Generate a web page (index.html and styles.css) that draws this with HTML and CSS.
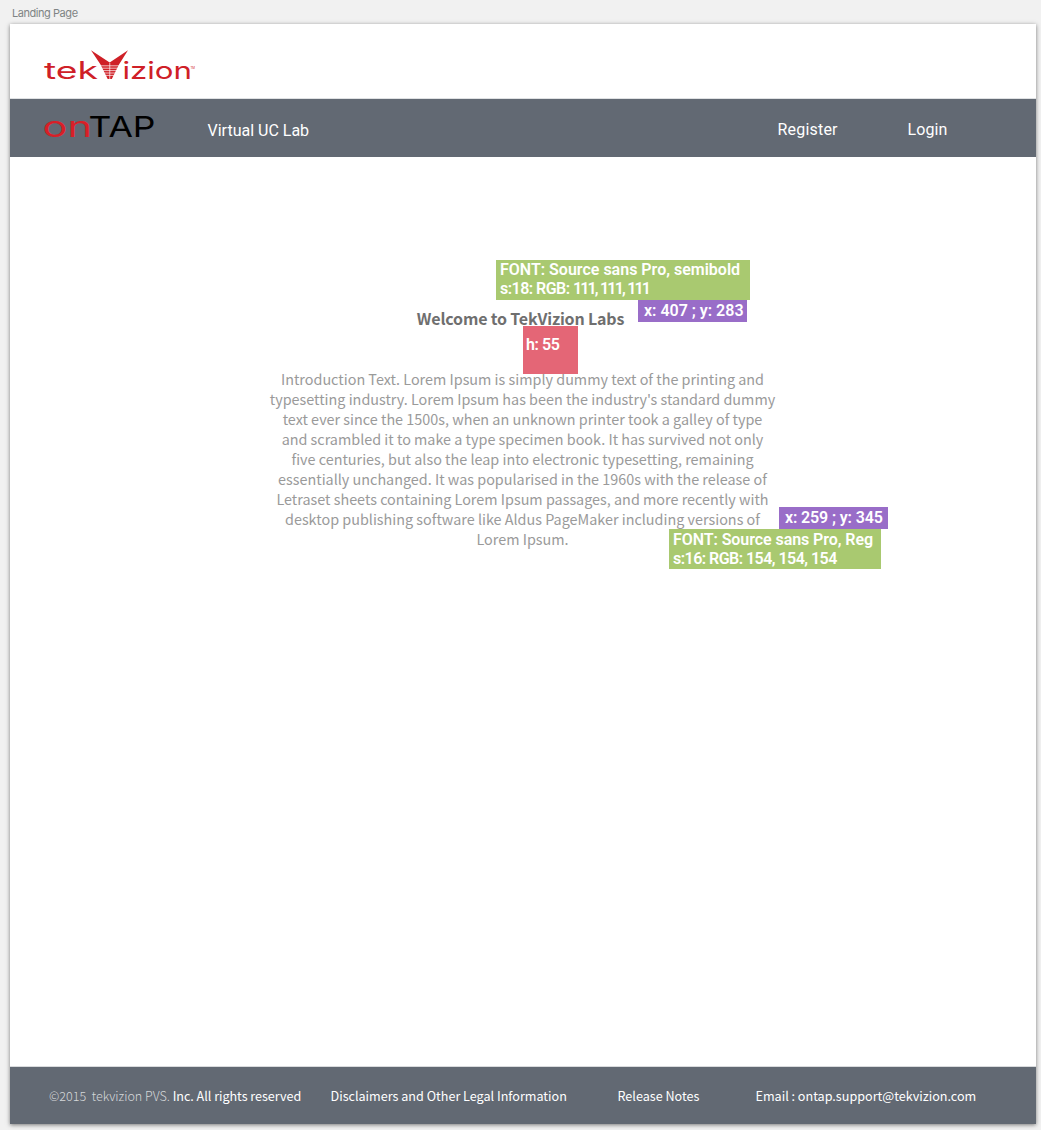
FILE: index.html
```html
<!DOCTYPE html>
<html lang="en">
<head>
<meta charset="utf-8">
<title>Landing Page</title>
<link rel="stylesheet" href="styles.css">
</head>
<body>
<div class="board-name">Landing Page</div>
<div class="board">
  <header class="brand">
    <svg class="logo" width="160" height="50" viewBox="40 42 160 50" role="img" aria-label="tekVizion">
      <g class="logo-text">
        <text x="44" y="79" textLength="54" lengthAdjust="spacingAndGlyphs">tek</text>
        <text x="122.500" y="79" textLength="69.500" lengthAdjust="spacingAndGlyphs">izion</text>
        <text class="tm" x="190.500" y="69" textLength="4.500" lengthAdjust="spacingAndGlyphs">TM</text>
      </g>
      <path class="mark" d="M91 50.300L109.700 62.500L128 50.300L119 64.500L111.800 79H107.700L100.500 64.500Z"/>
      <path class="slits" d="M100 65.800H120M101 68.200H119M102 70.600H118M103 73H117M104 75.400H116M109.750 63V80"/>
    </svg>
  </header>
  <nav class="bar">
    <svg class="product" width="120" height="42" viewBox="40 106 120 42" role="img" aria-label="onTAP">
      <text class="on" x="42.500" y="137" textLength="49.500" lengthAdjust="spacingAndGlyphs">on</text>
      <text class="tap" x="88.500" y="137" textLength="67" lengthAdjust="spacingAndGlyphs">TAP</text>
    </svg>
    <span class="lab">Virtual UC Lab</span>
    <a class="register">Register</a>
    <a class="login">Login</a>
  </nav>
  <main class="content">
    <h1 class="title">Welcome to TekVizion Labs</h1>
    <p class="intro">Introduction Text. Lorem Ipsum is simply dummy text of the printing and<br>typesetting industry. Lorem Ipsum has been the industry's standard dummy<br>text ever since the 1500s, when an unknown printer took a galley of type<br>and scrambled it to make a type specimen book. It has survived not only<br>five centuries, but also the leap into electronic typesetting, remaining<br>essentially unchanged. It was popularised in the 1960s with the release of<br>Letraset sheets containing Lorem Ipsum passages, and more recently with<br>desktop publishing software like Aldus PageMaker including versions of<br>Lorem Ipsum.</p>
    <div class="note font-note title-font">FONT: Source sans Pro, semibold<br><span class="spec">s:18: RGB: <span class="ones">111, 111, 111</span></span></div>
    <div class="note pos-note title-pos">x: 407 ; y: 283</div>
    <div class="note gap-note">h: 55</div>
    <div class="note pos-note intro-pos">x: 259 ; y: 345</div>
    <div class="note font-note intro-font">FONT: Source sans Pro, Reg<br><span class="spec">s:16: RGB: 154, 154, 154</span></div>
  </main>
  <footer class="footer">
    <span class="copyright"><span class="thin">©2015&nbsp; tekvizion PVS.</span> Inc. All rights reserved</span>
    <a class="legal">Disclaimers and Other Legal Information</a>
    <a class="release">Release Notes</a>
    <a class="email">Email : ontap.support@tekvizion.com</a>
  </footer>
</div>
</body>
</html>
```
FILE: styles.css
```css
* { box-sizing: border-box; }
body {
  margin: 0;
  height: 1130px;
  overflow: hidden;
  background: #f1f1f1;
  font-family: "Noto Sans CJK SC", "Noto Sans", sans-serif;
}
.board-name {
  height: 24px;
  padding: 5px 0 0 12px;
  font: 11px/16px Inter, sans-serif;
  letter-spacing: -.45px;
  color: #7f8484;
}
.board {
  display: flex;
  flex-direction: column;
  width: 1026px;
  height: 1100px;
  margin-left: 10px;
  background: #fff;
  box-shadow: 0 1px 4px rgba(0, 0, 0, .5);
}
.brand { height: 75px; padding: 18px 0 0 30px; border-bottom: 1px solid #dfe1e3; }
.logo, .product { display: block; flex: none; overflow: visible; }
.logo-text { font: 24px Inter, sans-serif; fill: #cf2027; }
.logo-text .tm { font-size: 4px; }
.mark { fill: #cf2027; }
.slits { stroke: #fff; stroke-width: .7; fill: none; }
.product text { font: 29px Inter, sans-serif; }
.product .on { fill: #d81f27; }
.product .tap { fill: #000; }
.bar {
  display: flex;
  align-items: flex-start;
  height: 58px;
  padding: 7px 0 0 30px;
  background: #626973;
  color: #fff;
  font: 16px/20px Roboto, sans-serif;
}
.lab { width: 570px; margin: 15px 0 0 47.5px; }
.register { width: 130px; margin-top: 14px; letter-spacing: .2px; }
.login { margin-top: 14px; letter-spacing: .1px; }
.content { position: relative; flex: 1; padding-top: 149px; text-align: center; }
.title {
  margin: 0;
  padding-right: 5px;
  font-size: 16px;
  line-height: 24px;
  font-weight: 600;
  letter-spacing: -.17px;
  color: #6f6f6f;
}
.intro { margin: 39px 0 0; padding-right: 1px; font-size: 14.38px; line-height: 20px; color: #9a9a9a; white-space: nowrap; }
.note {
  position: absolute;
  color: #fff;
  text-align: left;
  white-space: nowrap;
  font: 600 16px/19px Roboto, sans-serif;
}
.font-note { height: 40px; padding: 1px 4px; background: #a9c970; }
.pos-note { height: 22px; padding: 1px 6px; background: #996dc8; }
.spec { letter-spacing: -.53px; }
.ones { letter-spacing: -1.85px; word-spacing: 1.2px; }
.title-font { left: 486px; top: 103px; width: 254px; padding-top: 0; }
.title-pos { left: 628px; top: 143px; width: 109px; }
.gap-note { left: 513px; top: 169px; width: 55px; height: 48px; padding: 9px 3px; letter-spacing: -.4px; background: #e46676; }
.intro-pos { left: 769px; top: 350px; width: 109px; letter-spacing: -.12px; }
.intro-font { left: 659px; top: 372px; width: 212px; letter-spacing: -.07px; }
.footer {
  display: flex;
  height: 58px;
  padding: 19px 0 0 39px;
  border-top: 1px solid #d9dbdd;
  background: #626973;
  color: #fff;
  font-size: 12.6px;
  line-height: 20px;
  white-space: nowrap;
}
.thin { font-weight: 300; color: #d5d8da; }
.copyright { width: 281.5px; letter-spacing: -.03px; }
.legal { width: 287px; }
.release { width: 138px; }
```
